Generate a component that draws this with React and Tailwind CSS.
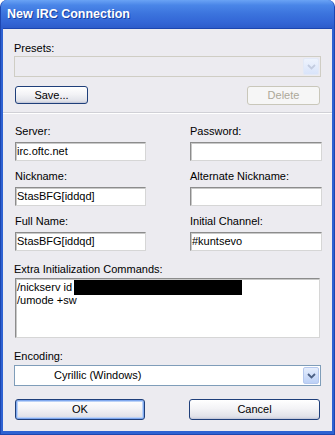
import React from 'react';

// Windows XP style "New IRC Connection" dialog

function Chevron({ color }) {
    return (
        <svg width="9" height="6" viewBox="0 0 9 6">
            <path d="M1 1 L4.5 4.5 L8 1" fill="none" stroke={color} strokeWidth="1.8" />
        </svg>
    );
}

function ComboArrow({ disabled }) {
    return (
        <div
            className={
                disabled
                    ? "w-[16px] h-full rounded-[2px] flex items-center justify-center bg-[linear-gradient(to_bottom,#EEF3FD,#D9E4FA)] border border-[#E2E9F7]"
                    : "w-[16px] h-full rounded-[2px] flex items-center justify-center bg-[linear-gradient(to_bottom,#E6EEFD,#BCD0F6)] border border-[#B5C8EE]"
            }
        >
            <Chevron color={disabled ? "#C3CCE0" : "#4D6185"} />
        </div>
    );
}

function XPButton({ children, className = "", isDefault, disabled }) {
    if (disabled) {
        return (
            <div className={"h-[19px] rounded-[3px] border border-[#C9C7BA] bg-[#F6F6F6] flex items-center justify-center text-[#ACA899] " + className}>
                {children}
            </div>
        );
    }
    return (
        <div
            className={
                "rounded-[3px] border border-[#1F3F7A] flex items-center justify-center bg-[linear-gradient(to_bottom,#FFFFFF_0%,#F3F3F6_45%,#E2E3EA_85%,#CDD0DB_100%)] " +
                (isDefault ? "shadow-[inset_0_0_0_1px_#7FA8EE,inset_0_0_0_2px_#BBD2F7] " : "shadow-[inset_0_-1px_0_#C6CADB] ") +
                className
            }
        >
            {children}
        </div>
    );
}

function TextBox({ value, className = "" }) {
    return (
        <div className={"h-[19px] bg-white border border-t-[#8C8C8C] border-l-[#8C8C8C] border-r-[#D6D6D6] border-b-[#D6D6D6] shadow-[inset_1px_1px_0_#C8C8C8] flex items-center pl-[1px] leading-[13px] " + className}>
            {value}
        </div>
    );
}

function Field({ label, value }) {
    return (
        <div className="flex flex-col">
            <div className="leading-[13px] h-[13px]">{label}</div>
            <TextBox value={value} className="mt-[4px]" />
        </div>
    );
}

export default function App() {
    return (
        <div className="w-[335px] h-[435px] bg-white font-['Liberation_Sans',Arial,sans-serif] text-[11px] text-black">
            <div className="w-full h-full flex flex-col rounded-t-[7px] overflow-hidden bg-[#2E62D2] border-l border-r border-b border-[#1C46B0]">
                {/* title bar */}
                <div className="h-[28px] shrink-0 flex items-center pl-[6px] bg-[linear-gradient(to_bottom,#6AA3F5_0%,#4A86E8_18%,#3B73DD_50%,#3366D6_80%,#2D5CCB_100%)]">
                    <span className="text-white font-bold text-[12.5px] leading-[14px] [text-shadow:1px_1px_0_#1A3F9E]">New IRC Connection</span>
                </div>
                {/* body */}
                <div className="flex-1 mx-[2px] mb-[3px] bg-[#ECEBF0] px-[11px] pt-[13px] flex flex-col border-t border-[#1C46B0]">
                    <div className="leading-[13px] h-[13px]">Presets:</div>
                    <div className="mt-[1px] h-[21px] border border-[#CFCDC4] bg-[#ECEBF0] flex justify-end p-[1px]">
                        <ComboArrow disabled />
                    </div>
                    <div className="mt-[9px] flex justify-between pl-[1px] pr-[1px]">
                        <XPButton className="w-[73px] h-[18px]">Save...</XPButton>
                        <XPButton disabled className="w-[73px]">Delete</XPButton>
                    </div>
                    <div className="mt-[7px] -mx-[11px] h-[2px] border-t border-[#D0D0D6] border-b border-b-white" />

                    <div className="mt-[11px] grid grid-cols-[131px_132px] gap-x-[44px] gap-y-[9px] pl-[1px]">
                        <Field label="Server:" value="irc.oftc.net" />
                        <Field label="Password:" value="" />
                        <Field label="Nickname:" value="StasBFG[iddqd]" />
                        <Field label="Alternate Nickname:" value="" />
                        <Field label="Full Name:" value="StasBFG[iddqd]" />
                        <Field label="Initial Channel:" value="#kuntsevo" />
                    </div>

                    <div className="mt-[12px] leading-[13px] h-[13px]">Extra Initialization Commands:</div>
                    <div className="mt-[2px] ml-[1px] mr-[1px] h-[60px] bg-white border border-t-[#8C8C8C] border-l-[#8C8C8C] border-r-[#D6D6D6] border-b-[#D6D6D6] shadow-[inset_1px_1px_0_#C8C8C8] pl-[1px] pt-[2px] leading-[13px]">
                        <div className="flex items-center h-[13px]">
                            <span>/nickserv id</span>
                            <span className="inline-block ml-[2px] w-[168px] h-[15px] bg-black" />
                        </div>
                        <div className="h-[13px]">/umode +sw</div>
                    </div>

                    <div className="mt-[12px] leading-[13px] h-[13px]">Encoding:</div>
                    <div className="mt-[2px] h-[21px] border border-[#7F9DB9] bg-white flex items-center p-[1px]">
                        <div className="flex-1 pl-[38px]">Cyrillic (Windows)</div>
                        <ComboArrow />
                    </div>

                    <div className="mt-[13px] flex justify-between pl-[1px] pr-[1px]">
                        <XPButton isDefault className="w-[130px] h-[21px]">OK</XPButton>
                        <XPButton className="w-[131px] h-[21px]">Cancel</XPButton>
                    </div>
                </div>
            </div>
        </div>
    );
}
